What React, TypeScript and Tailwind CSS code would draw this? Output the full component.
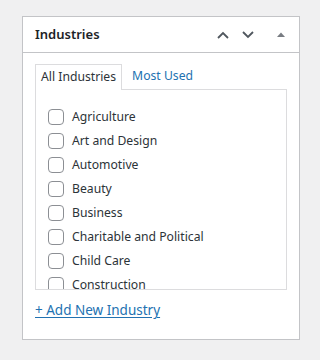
import React from "react";

const items = [
  "Agriculture",
  "Art and Design",
  "Automotive",
  "Beauty",
  "Business",
  "Charitable and Political",
  "Child Care",
  "Construction",
];

export default function App() {
  return (
    <div
      className="h-[360px] w-[320px] bg-[#f0f0f1] pt-4"
      style={{ fontFamily: '"Noto Sans", "Open Sans", sans-serif' }}
    >
      <div className="ml-[22px] w-[278px] h-[324px] border border-[#c3c4c7] bg-white flex flex-col">
        <div className="h-[36px] border-b border-[#c3c4c7] flex items-center pl-[12px] pr-[14px]">
          <h2 className="text-[13px] font-semibold text-[#1d2327] flex-1">Industries</h2>
          <div className="flex items-center">
            <svg width="14" height="10" viewBox="0 0 14 10" className="mr-[11px]">
              <path d="M2 8 L7 3 L12 8" fill="none" stroke="#50575e" strokeWidth="1.8" />
            </svg>
            <svg width="14" height="10" viewBox="0 0 14 10" className="mr-[22px]">
              <path d="M2 2 L7 7 L12 2" fill="none" stroke="#50575e" strokeWidth="1.8" />
            </svg>
            <svg width="8" height="6" viewBox="0 0 8 6">
              <path d="M0 5 L4 0.5 L8 5 Z" fill="#787c82" />
            </svg>
          </div>
        </div>
        <div className="px-[12px] pt-[10px] flex flex-col">
          <div className="flex items-end">
            <div className="h-[26px] border border-b-0 border-[#dcdcde] bg-white px-[5px] flex items-center text-[12.2px] text-[#2c3338] relative z-10 -mb-px">
              All Industries
            </div>
            <div className="h-[26px] px-[10px] flex items-center text-[12.2px] text-[#2271b1]">
              Most Used
            </div>
          </div>
          <div className="h-[201px] border border-[#dcdcde] overflow-hidden pl-[12px] pt-[15px]">
            {items.map((it) => (
              <div key={it} className="h-[24px] flex items-center">
                <span className="w-[16px] h-[16px] border border-[#8c8f94] rounded-[4px] bg-white shrink-0" />
                <span className="ml-[8px] text-[12.2px] text-[#2c3338] whitespace-nowrap">{it}</span>
              </div>
            ))}
          </div>
          <div className="mt-[10px] leading-[18px]">
            <a className="text-[13.5px] text-[#2271b1] underline underline-offset-2">+ Add New Industry</a>
          </div>
        </div>
      </div>
    </div>
  );
}
